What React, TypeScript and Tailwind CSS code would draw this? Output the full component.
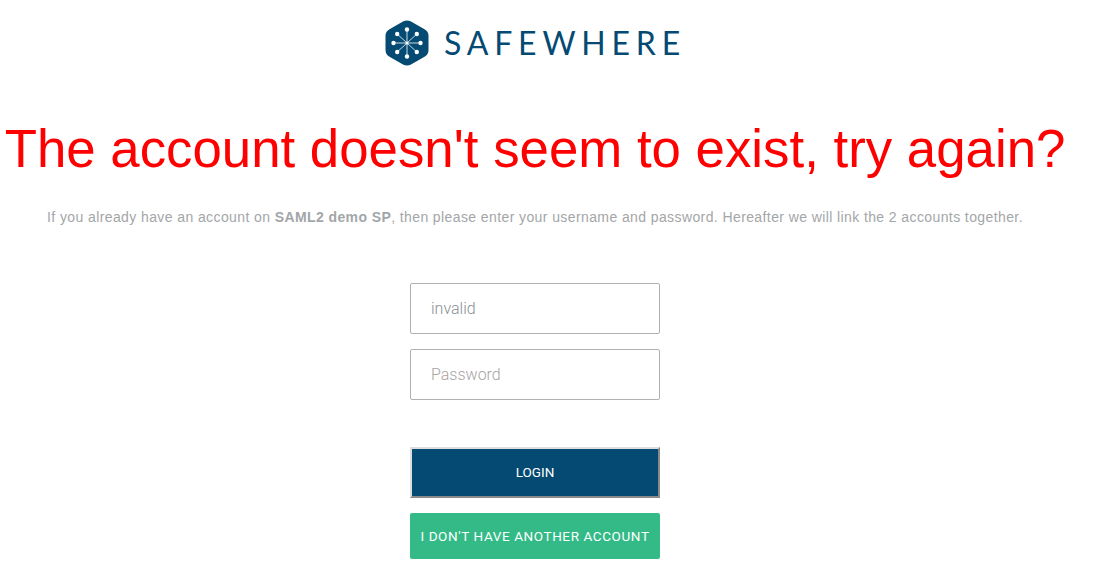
function Logo() {
  const arms = [
    [0, -13.5],
    [9.8, -9],
    [13.5, 0],
    [9.8, 9],
    [0, 13.5],
    [-9.8, 9],
    [-13.5, 0],
    [-9.8, -9],
  ];
  return (
    <svg width="44" height="48" viewBox="-22 -24 44 48" className="shrink-0">
      <path
        d="M-4 -21.5 Q0 -23.5 4 -21.5 L17.5 -13.7 Q21.5 -11.5 21.5 -7 L21.5 7 Q21.5 11.5 17.5 13.7 L4 21.5 Q0 23.5 -4 21.5 L-17.5 13.7 Q-21.5 11.5 -21.5 7 L-21.5 -7 Q-21.5 -11.5 -17.5 -13.7 Z"
        fill="#044a72"
      />
      {arms.map(([x, y], i) => (
        <g key={i}>
          <line x1="0" y1="0" x2={x} y2={y} stroke="#c9dae4" strokeWidth="1" />
          <circle cx={x} cy={y} r="2.2" fill="#ffffff" />
        </g>
      ))}
      <circle cx="0" cy="0" r="1.5" fill="#ffffff" />
    </svg>
  );
}

export default function App() {
  const inputClass =
    "block w-[250px] h-[51px] border border-[#b0b0b0] rounded-[2px] bg-white px-5 text-[16px] font-light text-[#8a8f93] placeholder:text-[#a8a39f] outline-none font-['Roboto',sans-serif]";

  return (
    <div className="w-[1070px] h-[580px] overflow-hidden bg-white flex flex-col items-center font-['Liberation_Sans',sans-serif]">
      <div className="flex items-center gap-[15px] mt-[19px] ml-[1px]">
        <Logo />
        <span className="text-[32px] leading-[48px] text-[#044a72] tracking-[5.8px] font-['Lato',sans-serif]">
          SAFEWHERE
        </span>
      </div>

      <h1 className="mt-[52px] text-[52.8px] leading-[60px] text-[#ff0000] whitespace-nowrap">
        The account doesn't seem to exist, try again?
      </h1>

      <p className="mt-[29px] text-[14px] leading-[18px] tracking-[0.4px] text-[#a3a6a8] whitespace-nowrap">
        If you already have an account on <b className="font-bold">SAML2 demo SP</b>, then please enter your username and password. Hereafter we will link the 2 accounts together.
      </p>

      <form className="mt-[57px] flex flex-col items-center font-['Roboto',sans-serif]">
        <input className={inputClass} defaultValue="invalid" />
        <input className={`${inputClass} mt-[15px]`} placeholder="Password" />
        <button
          type="button"
          className="mt-[47px] w-[250px] h-[51px] bg-[#044a72] border-2 border-t-[#dedede] border-l-[#dedede] border-r-[#8a8a8a] border-b-[#8a8a8a] text-white text-[13.5px]"
        >
          LOGIN
        </button>
        <button
          type="button"
          className="mt-[15px] w-[250px] h-[46px] bg-[#33ba87] rounded-[2px] text-white text-[13.5px] tracking-[0.6px] whitespace-nowrap"
        >
          I DON'T HAVE ANOTHER ACCOUNT
        </button>
      </form>
    </div>
  );
}
